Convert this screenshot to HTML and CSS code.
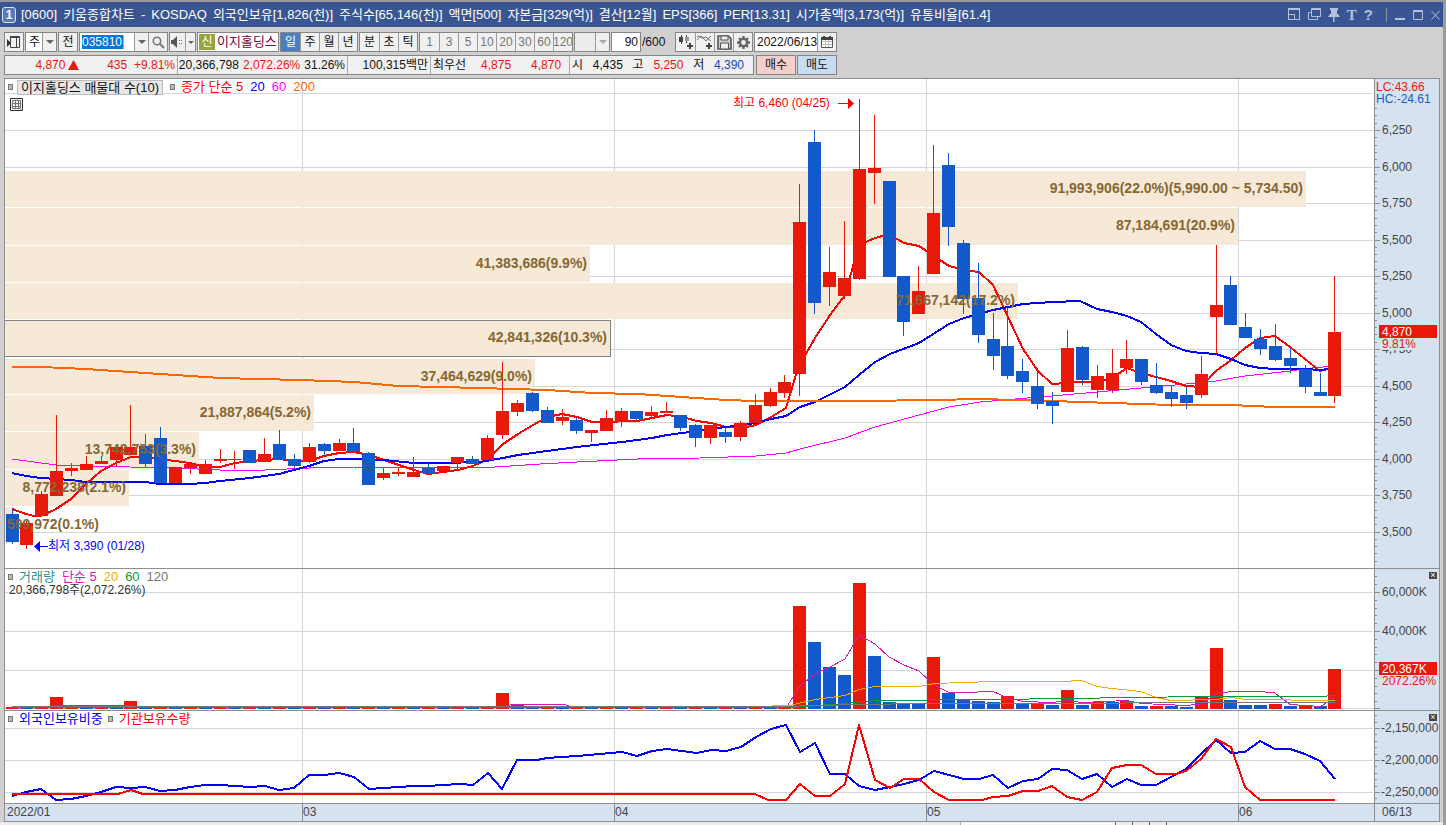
FILE: index.html
```html
<!DOCTYPE html>
<html lang="ko">
<head>
<meta charset="utf-8">
<title>[0600] 키움종합차트</title>
<link rel="stylesheet" href="styles.css">
</head>
<body>
<div class="window">
  <header class="titlebar">
    <span class="win-no">1</span>
    <h1 class="title"><span>[0600]</span><span>키움종합차트</span><span>-</span><span>KOSDAQ</span><span>외국인보유[1,826(천)]</span><span>주식수[65,146(천)]</span><span>액면[500]</span><span>자본금[329(억)]</span><span>결산[12월]</span><span>EPS[366]</span><span>PER[13.31]</span><span>시가총액[3,173(억)]</span><span>유통비율[61.4]</span></h1>
    <div class="win-tools">
      <button class="wbtn" aria-label="크기"><svg width="13" height="13" viewBox="0 0 13 13"><path d="M.5 1H12M.5 0V12M0 11.500H12M11.500 0V12M1 6.500H6.500V12" fill="none" stroke="currentColor" stroke-width="1"/><path d="M0 0H12V2H0z" fill="currentColor"/></svg></button>
      <button class="wbtn" aria-label="복사"><svg width="13" height="13" viewBox="0 0 13 13"><path d="M3.500 .5H12.500V8.500H3.500zM3 1.500H12M3 4.500H.5V11.500H9.500V9" fill="none" stroke="currentColor"/></svg></button>
      <button class="wbtn" aria-label="고정"><svg width="12" height="14" viewBox="0 0 12 14"><path d="M2 0H10V2H9V6H10L12 9H0L2 6H3V2H2zM5 9H6.500V14H5z" fill="currentColor"/></svg></button>
      <button class="wbtn glyph serif" aria-label="글꼴">T</button>
      <button class="wbtn glyph" aria-label="도움말">?</button>
      <span class="sep"></span>
      <button class="wbtn" aria-label="최소화"><svg width="11" height="13" viewBox="0 0 11 13"><path d="M0 10H10V12H0z" fill="currentColor"/></svg></button>
      <button class="wbtn" aria-label="최대화"><svg width="11" height="13" viewBox="0 0 11 13"><path d="M.5 2.500H9.500V11.500H.5zM0 3.500H10" fill="none" stroke="currentColor"/></svg></button>
      <button class="wbtn" aria-label="닫기"><svg width="9" height="13" viewBox="0 0 9 13"><path d="M.5 3L8.500 11.500M8.500 3L.5 11.500" fill="none" stroke="currentColor"/></svg></button>
    </div>
  </header>

  <div class="toolbar">
    <button class="btn w20" aria-label="패널"><svg width="14" height="14" viewBox="0 0 14 14"><path d="M4 1.500H12.500V12.500H3.500V1M3 2.500H13M9.500 3V12" fill="none" stroke="#444"/><path d="M0 4L4 8L0 12z" fill="#333"/></svg></button>
    <label class="combo w32"><select aria-label="시장"><option>주</option></select><span class="drop"><i class="caret"></i></span></label>
    <button class="btn w20">전</button>
    <div class="combo w89">
      <span class="code"><input class="code-input" aria-label="종목코드" value="035810"></span>
      <button class="drop" aria-label="목록"><i class="caret"></i></button>
      <button class="drop wide" aria-label="검색"><svg width="13" height="13" viewBox="0 0 13 13"><circle cx="5" cy="5" r="3.700" fill="none" stroke="#777" stroke-width="1.600"/><path d="M8 8L12 12" stroke="#777" stroke-width="2"/></svg></button>
    </div>
    <div class="combo w27">
      <button class="drop fill" aria-label="소리"><svg width="14" height="12" viewBox="0 0 14 12"><path d="M0 4H2L6 0V12L2 8H0z" fill="#555"/><path d="M8 4h1v1h-1zM8 7h1v1h-1zM10 4h1v1h-1zM10 7h1v1h-1z" fill="#666"/></svg></button>
      <button class="drop slim" aria-label="소리 설정"><i class="caret small"></i></button>
    </div>
    <div class="stock"><span class="tag">신</span><span class="stock-name">이지홀딩스</span></div>
    <div class="group">
      <button class="on">일</button><button>주</button><button>월</button><button>년</button>
    </div>
    <div class="group"><button>분</button><button>초</button><button>틱</button></div>
    <div class="group nums">
      <button>1</button><button>3</button><button>5</button><button>10</button><button>20</button><button>30</button><button>60</button><button>120</button>
    </div>
    <label class="combo off w36"><select aria-label="주기" disabled><option></option></select><span class="drop"><i class="caret pale"></i></span></label>
    <input class="count" aria-label="봉 개수" value="90"><span class="total">/600</span>
    <div class="group icons">
      <button aria-label="차트 추가"><svg width="16" height="15" viewBox="0 0 16 15"><path d="M3.500 0V9M8.500 0V8" stroke="#444"/><path d="M1 2H5V7H1z" fill="#444"/><path d="M7 2H11V6H7z" fill="#999"/><path d="M12 8V14M9 11H15" stroke="#444" stroke-width="2"/></svg></button>
      <button aria-label="지표 추가"><svg width="16" height="15" viewBox="0 0 16 15"><path d="M0 5L4 1L9 6L14 1M0 2L2 1L5 3L9 2L14 6" fill="none" stroke="#777"/><path d="M12 8V14M9 11H15" stroke="#444" stroke-width="2"/></svg></button>
      <button aria-label="저장"><svg width="15" height="15" viewBox="0 0 15 15"><path d="M1 1H11.500L14 3.500V14H1z" fill="#ccc" stroke="#555" stroke-width="1.600"/><path d="M4 1H11V5H4zM3.500 8H11.500V14H3.500z" fill="#eee" stroke="#555"/></svg></button>
      <button aria-label="설정"><svg width="15" height="15" viewBox="0 0 15 15"><path d="M7.500 1V14M1 7.500H14M3 3L12 12M12 3L3 12" stroke="#666" stroke-width="2.400"/><circle cx="7.500" cy="7.500" r="3.600" fill="#f0f0f0" stroke="#666" stroke-width="2.400"/></svg></button>
    </div>
    <div class="combo w83">
      <input class="date" aria-label="날짜" value="2022/06/13">
      <button class="drop wide" aria-label="달력"><svg width="12" height="12" viewBox="0 0 12 12"><path d="M.5 1.500H11.500V11.500H.5z" fill="#fff" stroke="#555"/><path d="M1 5.500H11M1 8.500H11M4.500 4V11M7.500 4V11" fill="none" stroke="#bbb"/><path d="M0 1H12V4H0zM2 0H4V2H2zM8 0H10V2H8z" fill="#444"/></svg></button>
    </div>
  </div>

  <div class="quote">
    <div class="cells">
      <div class="cell c1 up"><b class="n60">4,870</b><svg width="11" height="10" viewBox="0 0 11 10"><path d="M5.500 0L11 10H0z" fill="#e81909"/></svg><b class="n48">435</b><b class="n48">+9.81%</b></div>
      <div class="cell c2"><b>20,366,798</b><b class="up">2,072.26%</b><b>31.26%</b></div>
      <div class="cell c3"><b>100,315백만</b></div>
      <div class="cell c4"><b>최우선</b><b class="up n42">4,875</b><b class="up n50">4,870</b></div>
      <div class="cell c5"><b>시</b><b>4,435</b><b>고</b><b class="up">5,250</b><b>저</b><b class="down">4,390</b></div>
    </div>
    <button class="order buy">매수</button>
    <button class="order sell">매도</button>
  </div>

  <main class="charts">
    <section class="pane price">
      <div class="plot"><svg id="price" viewBox="5 79 1369 489" preserveAspectRatio="none"></svg>
        <div class="legend"><i class="dot"></i><span class="boxed">이지홀딩스 매물대 수(10)</span><i class="dot"></i><span class="c-red">종가 단순 5</span><span class="c-blue">20</span><span class="c-pink">60</span><span class="c-orange">200</span></div>
        <button class="gridbtn" aria-label="표"><svg width="13" height="13" viewBox="0 0 13 13"><path d="M.5 .5H12.500V12.500H.5z" fill="#eee" stroke="#333"/><path d="M2.500 2.500H10.500V10.500H2.500zM2 5.500H11M2 8.500H11M5.500 2V11M8.500 2V11" fill="none" stroke="#777"/></svg></button>
      </div>
      <div class="axis"><svg id="price-axis" viewBox="1375 79 64 489" preserveAspectRatio="none"></svg></div>
    </section>
    <section class="pane volume">
      <div class="plot"><svg id="volume" viewBox="5 569 1369 141" preserveAspectRatio="none"></svg>
        <div class="legend"><i class="dot"></i><span class="c-teal">거래량</span><span class="c-mag">단순 5</span><span class="c-gold">20</span><span class="c-green">60</span><span class="c-gray">120</span></div>
        <p class="reading">20,366,798주(2,072.26%)</p>
      </div>
      <div class="axis"><svg id="volume-axis" viewBox="1375 569 64 141" preserveAspectRatio="none"></svg><button class="shut" aria-label="닫기">×</button></div>
    </section>
    <section class="pane holding">
      <div class="plot"><svg id="holding" viewBox="5 711 1369 92" preserveAspectRatio="none"></svg>
        <div class="legend"><i class="dot"></i><span class="c-blue">외국인보유비중</span><i class="dot tight"></i><span class="c-red">기관보유수량</span></div>
      </div>
      <div class="axis"><svg id="holding-axis" viewBox="1375 711 64 92" preserveAspectRatio="none"></svg><button class="shut" aria-label="닫기">×</button></div>
    </section>
    <section class="pane dates">
      <div class="plot"><svg id="dates" viewBox="5 804 1369 17" preserveAspectRatio="none"></svg></div>
      <div class="axis"><span class="last-date">06/13</span></div>
    </section>
  </main>
  <footer class="strip"><span class="track"></span><span class="tab"></span><span class="tab"></span><span class="tab"></span><span class="tab"></span></footer>
</div>
<script src="chart.js"></script>
</body>
</html>
```
FILE: styles.css
```css
* { box-sizing: border-box; }
body {
  margin: 0;
  background: #d0d0d0;
  color: #111;
  font: 12px/16px "Liberation Sans", "Noto Sans CJK KR", sans-serif;
}
button, input, select { font: inherit; color: inherit; margin: 0; padding: 0; border: 0; border-radius: 0; background: none; }
button { display: flex; align-items: center; justify-content: center; }
b { font-weight: normal; }
svg { display: block; flex: none; }

.window {
  min-height: 100vh;
  display: flex;
  flex-direction: column;
  border-top: 2px solid #999;
  border-right: 3px solid #9c9c9c;
}

/* title bar */
.titlebar {
  height: 25px;
  display: flex;
  align-items: center;
  gap: 5px;
  padding: 0 3px 0 2px;
  background: #3a5692;
  color: #fff;
  flex: none;
}
.win-no {
  width: 14px;
  height: 16px;
  border: 1px solid #dfe6f5;
  border-radius: 3px;
  background: #5b79b8;
  font-weight: bold;
  line-height: 14px;
  text-align: center;
}
.title { display: flex; gap: 6px; margin: 0; font-size: 13px; font-weight: normal; line-height: 18px; white-space: nowrap; }
.win-tools { margin-left: auto; display: flex; align-items: center; gap: 7px; color: #b4c0dc; }
.wbtn { height: 16px; min-width: 9px; }
.glyph { font-size: 15px; font-weight: bold; }
.serif { font-family: "Liberation Serif", serif; }
.sep { width: 1px; height: 14px; background: #8b93a5; margin: 0 1px 0 6px; }

/* tool bar */
.toolbar { display: flex; align-items: center; gap: 1px; padding: 5px 4px 0; flex: none; height: 25px; }
.btn, .combo, .stock, .group, .count { height: 20px; border: 1px solid #858585; background: #f0f0f0; flex: none; }
.w20 { width: 20px; }
.w27 { width: 27px; }
.w32 { width: 32px; }
.w36 { width: 36px; }
.w83 { width: 83px; }
.w89 { width: 89px; }
.combo { display: flex; background: #fff; overflow: hidden; }
.combo.off { background: #ececec; }
.combo select { flex: 1; min-width: 0; padding-left: 3px; appearance: none; }
.drop { width: 14px; display: flex; align-items: center; justify-content: center; background: #f0f0f0; border-left: 1px solid #999; flex: none; }
.drop.wide { width: 19px; }
.drop.slim { width: 10px; }
.drop.fill { flex: 1; border: 0; }
.caret { border: 4px solid transparent; border-top-color: #666; border-bottom: 0; }
.caret.small { border-width: 3px 3px 0; }
.caret.pale { border-top-color: #aaa; }
.code { flex: 1; display: flex; align-items: center; padding-left: 2px; min-width: 0; }
.code-input { width: 42px; height: 14px; background: #0078d7; color: #fff; border-right: 1px solid #ff9a30; line-height: 14px; }
.stock { width: 82px; display: flex; align-items: center; background: #fff; color: #7a0038; overflow: hidden; padding-left: 1px; gap: 2px; }
.tag { width: 16px; height: 16px; background: #98a33c; color: #fff; text-align: center; flex: none; }
.stock-name { white-space: nowrap; font-size: 13px; }
.group { display: flex; }
.group button { width: 19px; height: 18px; }
.group button + button { border-left: 1px solid #999; }
.group .on { background: #4b7fc4; color: #fff; }
.nums { color: #777; }
.nums button { overflow: hidden; }
.count { width: 30px; background: #fff; text-align: right; padding-right: 2px; }
.total { width: 32px; flex: none; }
.date { flex: 1; min-width: 0; padding-left: 2px; }

/* quote line */
.quote { display: flex; gap: 2px; padding: 3px 4px 0; height: 25px; flex: none; }
.cells { display: flex; width: 750px; height: 20px; border: 1px solid #858585; background: #f0f0f0; }
.cell { display: flex; align-items: center; justify-content: flex-end; gap: 5px; padding: 0 2px; white-space: nowrap; }
.cell + .cell { border-left: 1px solid #aaa; }
.c1 { width: 172px; gap: 3px; }
.c2 { width: 170px; gap: 4px; }
.c3 { width: 83px; }
.c4 { width: 139px; justify-content: flex-start; gap: 0; }
.c5 { flex: 1; justify-content: space-between; padding-right: 9px; }
.n60 { width: 60px; text-align: right; }
.n48 { width: 46px; text-align: right; }
.n42 { width: 45px; text-align: right; }
.n50 { width: 50px; text-align: right; }
.up { color: #e81909; }
.down { color: #1247c4; }
.order { width: 40px; height: 20px; border: 1px solid #858585; }
.buy { background: #f5cfca; }
.sell { background: #c9ddf2; margin-left: -1px; }

/* charts */
.charts {
  flex: 1;
  display: flex;
  flex-direction: column;
  margin: 1px 3px 0 4px;
  border: 1px solid #8e8e8e;
  background: #fff;
}
.pane { display: grid; grid-template-columns: 1fr 65px; min-height: 0; }
.pane + .pane { border-top: 1px solid #8e8e8e; }
.price { flex: 489 1 0; }
.volume { flex: 141 1 0; }
.holding { flex: 92 1 0; }
.dates { flex: none; height: 18px; background: #d7e2f0; }
.plot, .axis { position: relative; min-width: 0; min-height: 0; }
.axis { background: #d7e2f0; border-left: 1px solid #8e8e8e; }
.plot > svg, .axis > svg { position: absolute; inset: 0; width: 100%; height: 100%; }
.legend { position: absolute; top: 0; left: 3px; display: flex; align-items: center; gap: 7px; height: 16px; font-size: 13px; white-space: nowrap; }
.dot { width: 5px; height: 6px; border: 1px solid #777; background: #bbb; margin-right: -1px; }
.dot.tight { margin-left: -2px; }
.boxed { background: #e8e8e8; border: 1px solid #bbb; padding: 0 3px; margin-left: -2px; line-height: 13px; }
.gridbtn { position: absolute; top: 19px; left: 5px; }
.reading { position: absolute; top: 14px; left: 4px; margin: 0; line-height: 14px; color: #333; }
.shut { position: absolute; top: 3px; right: 2px; width: 8px; height: 7px; background: #444; color: #fff; font-size: 9px; line-height: 7px; }
.last-date { display: block; padding-left: 7px; color: #444; line-height: 17px; }
.c-red { color: #f00; }
.c-blue { color: #00f; }
.c-pink { color: #f0f; }
.c-orange { color: #f60; }
.c-teal { color: #2a9090; }
.c-mag { color: #d619b4; }
.c-gold { color: #f0ad00; }
.c-green { color: #0a9640; }
.c-gray { color: #777; }

/* drawing */
.grid { fill: none; stroke: #d6d6d6; shape-rendering: crispEdges; }
.tick { fill: none; stroke: #8e8e8e; shape-rendering: crispEdges; }
.band { fill: #f6e9d7; shape-rendering: crispEdges; }
.band.marked { stroke: #808080; }
.r { fill: #e81909; shape-rendering: crispEdges; }
.b { fill: #125acb; shape-rendering: crispEdges; }
.line { fill: none; stroke-linejoin: round; shape-rendering: crispEdges; }
.amount { fill: #866732; font-size: 14px; font-weight: bold; }
.scale { fill: #444; font-size: 12px; }
.note { font-size: 12px; }
.flag { fill: #e81909; }
.flag-back { fill: #d7e2f0; }
.flag-text { fill: #fff; font-size: 12px; }
.change { fill: #e81909; font-size: 12px; }

.strip { height: 3px; display: flex; justify-content: flex-end; background: #ececec; padding-right: 260px; flex: none; }
.track { width: 155px; background: #f8f8f8; border-left: 1px solid #aaa; }
.tab { width: 17px; border-left: 1px solid #666; }
```
FILE: chart.js
```js
const START = 6, STEP = 14.865;
const left = i => Math.floor(START + STEP * i);

// colour, high, body top, body bottom, low
const candles = `b509,514,542,544 r521,523,545,549 r491,494,516,516 r415,471,496,496 r463,468,471,476
r456,464,470,470 r456,461,464,464 r447,447,460,467 r405,447,455,455 b434,446,464,467
b427,438,483,483 r467,467,483,483 r464,464,468,474 r460,464,474,474 r449,459,461,463
r451,459,460,469 b450,450,463,463 r438,454,462,462 b430,444,460,460 b454,459,466,468
r443,447,462,463 b443,444,451,455 r439,443,451,451 b428,443,452,452 b452,453,485,485
r467,473,478,480 r467,472,474,476 r457,472,477,477 b463,468,473,473 r466,466,471,471
r457,457,463,469 b456,459,464,464 r435,438,460,460 r362,411,435,439 r400,403,412,416
b392,393,411,412 b407,410,423,423 r409,417,421,425 b417,420,431,434 r430,430,433,442
r410,418,431,431 r408,411,422,427 b411,411,419,420 r406,412,416,419 r402,411,413,413
b415,415,428,431 b424,425,438,447 r425,425,438,444 b428,432,437,443 r421,423,437,441
r394,405,423,423 r388,392,406,407 r375,382,393,398 r184,222,374,396 b130,142,303,314
r247,272,287,306 r221,278,296,299 r99,169,279,280 r115,168,173,204 b181,181,277,277
b276,276,322,336 r266,291,314,314 r145,213,274,274 b153,165,227,246 b240,243,299,314
b263,298,335,343 b313,339,356,370 b308,346,376,379 b359,371,382,393 b368,386,404,409
b392,401,406,424 r330,348,392,392 b346,347,380,385 r365,376,390,398 r349,373,390,393
r340,359,368,374 b359,359,382,385 b363,385,393,394 b386,392,399,407 b387,395,403,409
r356,374,395,398 r245,305,317,354 b276,285,325,325 b313,327,338,338 b329,339,349,355
b324,346,360,361 b348,358,366,373 b365,369,387,393 b373,392,396,396 r276,332,396,403`
  .split(/\s+/).map(s => [s[0], ...s.slice(1).split(",").map(Number)]);

const volumes = {0:"r707",3:"r697",8:"r701",33:"r693",34:"b705",52:"r705",53:"r606",54:"b642",55:"b667",56:"b675",57:"r583",58:"b656",59:"b702",60:"b704",61:"b704",62:"r657",63:"b693",64:"b699",65:"b701",66:"b702",67:"r696",68:"b703",69:"r703",70:"b705",71:"r690",72:"b705",73:"r702",74:"b702",75:"r701",76:"b706",77:"r706",78:"b706",79:"b707",80:"r696",81:"r648",82:"b700",83:"b705",84:"b705",85:"r704",86:"b706",87:"r706",88:"b706",89:"r669"};

const rect = (x, y, w, h, c) => `<rect x="${x}" y="${y}" width="${w}" height="${h}" class="${c}"/>`;
const text = (x, y, c, s, a = "start", f = "") => `<text x="${x}" y="${y}" class="${c}" text-anchor="${a}"${f && ` fill="${f}"`}>${s}</text>`;
const line = (pts, color, w) => `<polyline class="line" points="${pts}" stroke="${color}" stroke-width="${w}"/>`;
const months = [302, 614, 926, 1238];
const grid = (ys, top, bottom) => `<path class="grid" d="${ys.map(y => `M5 ${y + .5}H1373`).join("") + months.map(x => `M${x + .5} ${top}V${bottom}`).join("")}"/>`;
const put = (id, s) => { document.getElementById(id).innerHTML = s; };

// price
const bands = [[171,36,1306,"91,993,906(22.0%)(5,990.00 ~ 5,734.50)"],[208,37,1238,"87,184,691(20.9%)"],[246,36,590,"41,383,686(9.9%)"],[283,36,1018,"71,667,142(17.2%)"],[320,36,610,"42,841,326(10.3%)"],[359,35,535,"37,464,629(9.0%)"],[395,36,314,"21,887,864(5.2%)"],[432,37,199,"13,742,753(3.3%)"],[470,36,129,"8,772,238(2.1%)"],[507,36,14,""]];
let s = grid([93,130,167,203,240,276,313,349,386,422,459,495,532], 79, 568);
s += bands.map(([y, h, r], i) => i === 4 ? rect(4.5, y + .5, r - 4, h, "band marked") : rect(5, y, r - 5, h, "band")).join("");
s += line("12,459 41,463 56,465 86,466 130,467 175,468 220,470 265,470 309,468 354,467 384,467 440,467 495,467 540,464 577,462 637,459 700,458 756,456 786,453 800,449 845,438 875,427 919,415 934,411 949,407 980,402 1015,399 1052,396 1097,392 1141,388 1186,384 1216,381 1245,376 1290,371 1312,368 1335,366", "#f0f", 1);
s += line("12,509 26,514 34,516 41,516 56,509 71,499 86,484 101,471 116,463 131,457 145,457 160,459 175,461 190,463 205,467 220,467 235,463 250,461 265,460 279,459 294,461 309,461 324,456 339,453 354,452 369,455 384,460 399,465 414,470 428,474 443,472 458,470 473,466 488,459 503,444 518,434 533,425 547,417 562,414 577,417 592,422 607,423 622,421 637,421 652,418 667,415 682,417 697,421 711,423 726,427 741,428 756,425 771,417 786,408 798,368 815,338 830,315 845,295 859,245 875,238 886,235 890,235 904,243 919,246 934,256 949,266 964,270 979,272 993,285 1008,317 1023,349 1038,371 1052,384 1067,383 1082,382 1097,382 1112,378 1127,368 1141,373 1156,377 1171,381 1186,386 1201,387 1216,371 1231,360 1245,348 1260,338 1275,336 1290,347 1305,359 1320,371 1335,367", "#f00", 2);
s += line("12,473 26,476 41,478 71,480 86,482 145,482 160,484 190,484 205,483 220,481 250,478 279,474 309,466 324,461 339,459 384,460 414,463 443,463 480,462 503,458 518,455 547,451 577,447 622,442 652,438 667,435 697,431 726,427 756,423 771,419 786,416 800,407 815,402 845,387 859,375 875,362 890,354 919,343 949,324 964,318 993,310 1023,304 1052,302 1080,301 1097,309 1112,312 1127,316 1141,322 1156,334 1171,345 1186,351 1201,353 1216,354 1231,359 1245,365 1260,368 1275,369 1305,369 1320,370 1335,368", "#00f", 2);
s += line("12,367 41,367 86,369 130,372 175,375 220,378 300,380 354,382 399,386 480,388 547,390 592,393 637,394 682,397 726,400 756,401 860,401 934,400 980,399 1052,401 1112,403 1171,405 1231,405 1275,407 1335,407", "#f60", 2);
candles.forEach(([c, hi, t, b, lo], i) => {
  s += rect(left(i), t, 13, b - t, c) + rect(left(i) + 6, hi, 1, lo - hi, c);
});
s += bands.map(([y, h, r, t]) => text(r - 3, y + 22, "amount", t, "end")).join("");
s += text(7, 529, "amount", "599,972(0.1%)");
s += text(733, 107, "note", "최고 6,460 (04/25)", "start", "#f00");
s += `<path d="M838 103H848V98L854 103.5L848 109V104H838z" fill="#f00"/>`;
s += text(48, 550, "note", "최저 3,390 (01/28)", "start", "#00f");
s += `<path d="M48 546H40V541L34 546.5L40 552V547H48z" fill="#00f"/>`;
put("price", s);

// volume
s = grid([592,631,670,708], 569, 710);
candles.forEach((c, i) => {
  const v = volumes[i] || (i % 2 ? "b708" : "r708");
  const top = +v.slice(1);
  s += rect(left(i), top, 13, 709 - top, v[0]);
});
s += line("12,707.5 48,707.5 56,705.5 130,705.5 140,707.5 500,707.5 512,704.5 565,704.5 572,707.5 787,706.5 800,686 815,674 830,667 845,659 859,635 875,644 889,657 904,665 919,671 934,685 949,692.5 964,692.5 993,691.5 1008,698 1023,701.5 1052,702.5 1067,700.5 1082,702.5 1127,700.5 1141,703.5 1186,705.5 1201,704 1216,694 1231,691.5 1260,691.5 1275,693 1290,704.5 1320,706.5 1335,698", "#d619b4", 1);
s += line("555,706.5 755,706.5 790,705.5 815,699.5 845,695.5 859,689.5 875,686.5 920,686.5 934,683.5 993,681.5 1060,681.5 1082,680.5 1097,686.5 1112,688.5 1141,691.5 1156,697.5 1171,700.5 1216,699.5 1231,697.5 1245,699.5 1335,700.5", "#f0ad00", 1);
s += line("12,707.5 790,707.5 845,703.5 875,700.5 980,699.5 1080,698.5 1120,697.5 1216,696.5 1320,696.5 1335,695.5", "#0a9640", 1);
s += line("12,706.5 780,706.5 859,704.5 926,703.5 1335,702.5", "#777", 1);
put("volume", s);

// holding
s = grid([728,760,792], 711, 803);
s += line("12,796 26,792 41,789 56,800 71,799 86,796 101,792 116,787 131,788 145,787 160,791 175,790 190,787 205,785 220,785 250,787 265,786 279,790 294,788 309,775 324,775 339,773 354,777 369,789 384,788 399,787 414,786 428,786 443,785 460,784 473,785 488,773 502,789 517,760 537,760 547,758 577,756 600,754 622,752 637,756 652,751 667,749 682,751 697,753 711,750 726,751 741,747 756,737 771,729 786,725 800,752 815,743 830,774 845,774 859,786 875,790 890,787 904,784 919,780 934,771 949,775 964,779 979,779 993,775 1008,788 1023,781 1038,779 1052,769 1067,770 1082,779 1097,774 1112,787 1127,779 1141,785 1156,785 1171,777 1186,769 1201,754 1216,740 1231,753 1245,752 1260,741 1275,749 1290,749 1305,754 1320,761 1335,779", "#00f", 2);
s += line("12,794 118,794 131,790 143,794 755,794 768,800 786,800 800,784 815,796 830,796 845,784 859,725 875,780 890,788 904,779 919,779 934,792 949,800 982,800 993,797 1008,796 1023,791 1038,791 1052,786 1067,797 1082,800 1097,792 1112,768 1127,765 1141,765 1156,774 1176,774 1186,771 1201,759 1216,739 1231,747 1245,787 1260,800 1335,800", "#f00", 2);
put("holding", s);

// scales
function ticks(majors, gap, from, to) {
  let d = majors.map(y => `M1375 ${y + .5}H1380`).join("");
  for (let y = majors[0]; y > from; y -= gap) d += `M1375 ${Math.round(y) + .5}H1377`;
  for (let y = majors[0]; y < to; y += gap) d += `M1375 ${Math.round(y) + .5}H1377`;
  return `<path class="tick" d="${d}"/>`;
}
const prices = [130,167,203,240,276,313,349,386,422,459,495,532];
s = ticks(prices, 7.3, 108, 562);
s += prices.map((y, i) => text(1382, y + 4, "scale", (6250 - 250 * i).toLocaleString("en-US"))).join("");
s += text(1376, 91, "note", "LC:43.66", "start", "#e81909") + text(1376, 103, "note", "HC:-24.61", "start", "#125acb");
s += rect(1381, 338, 56, 12, "flag-back");
s += rect(1379, 325, 58, 13, "flag") + text(1382, 336, "flag-text", "4,870") + text(1382, 348, "change", "9.81%");
put("price-axis", s);
s = ticks([592,631,670,708], 7.8, 572, 705);
s += text(1382, 596, "scale", "60,000K") + text(1382, 635, "scale", "40,000K");
s += rect(1379, 662, 58, 13, "flag") + text(1382, 673, "flag-text", "20,367K") + text(1382, 685, "change", "2072.26%");
put("volume-axis", s);
s = ticks([728,760,792], 6.4, 715, 800);
s += [[732,"-2,150,000"],[764,"-2,200,000"],[796,"-2,250,000"]].map(([y, t]) => text(1381, y, "scale", t)).join("");
put("holding-axis", s);
s = `<path class="tick" d="${months.map(x => `M${x + .5} 804V821`).join("")}"/>` + text(7, 816, "scale", "2022/01");
s += months.map((x, i) => text(x + 1, 816, "scale", "0" + (i + 3))).join("");
put("dates", s);
```
